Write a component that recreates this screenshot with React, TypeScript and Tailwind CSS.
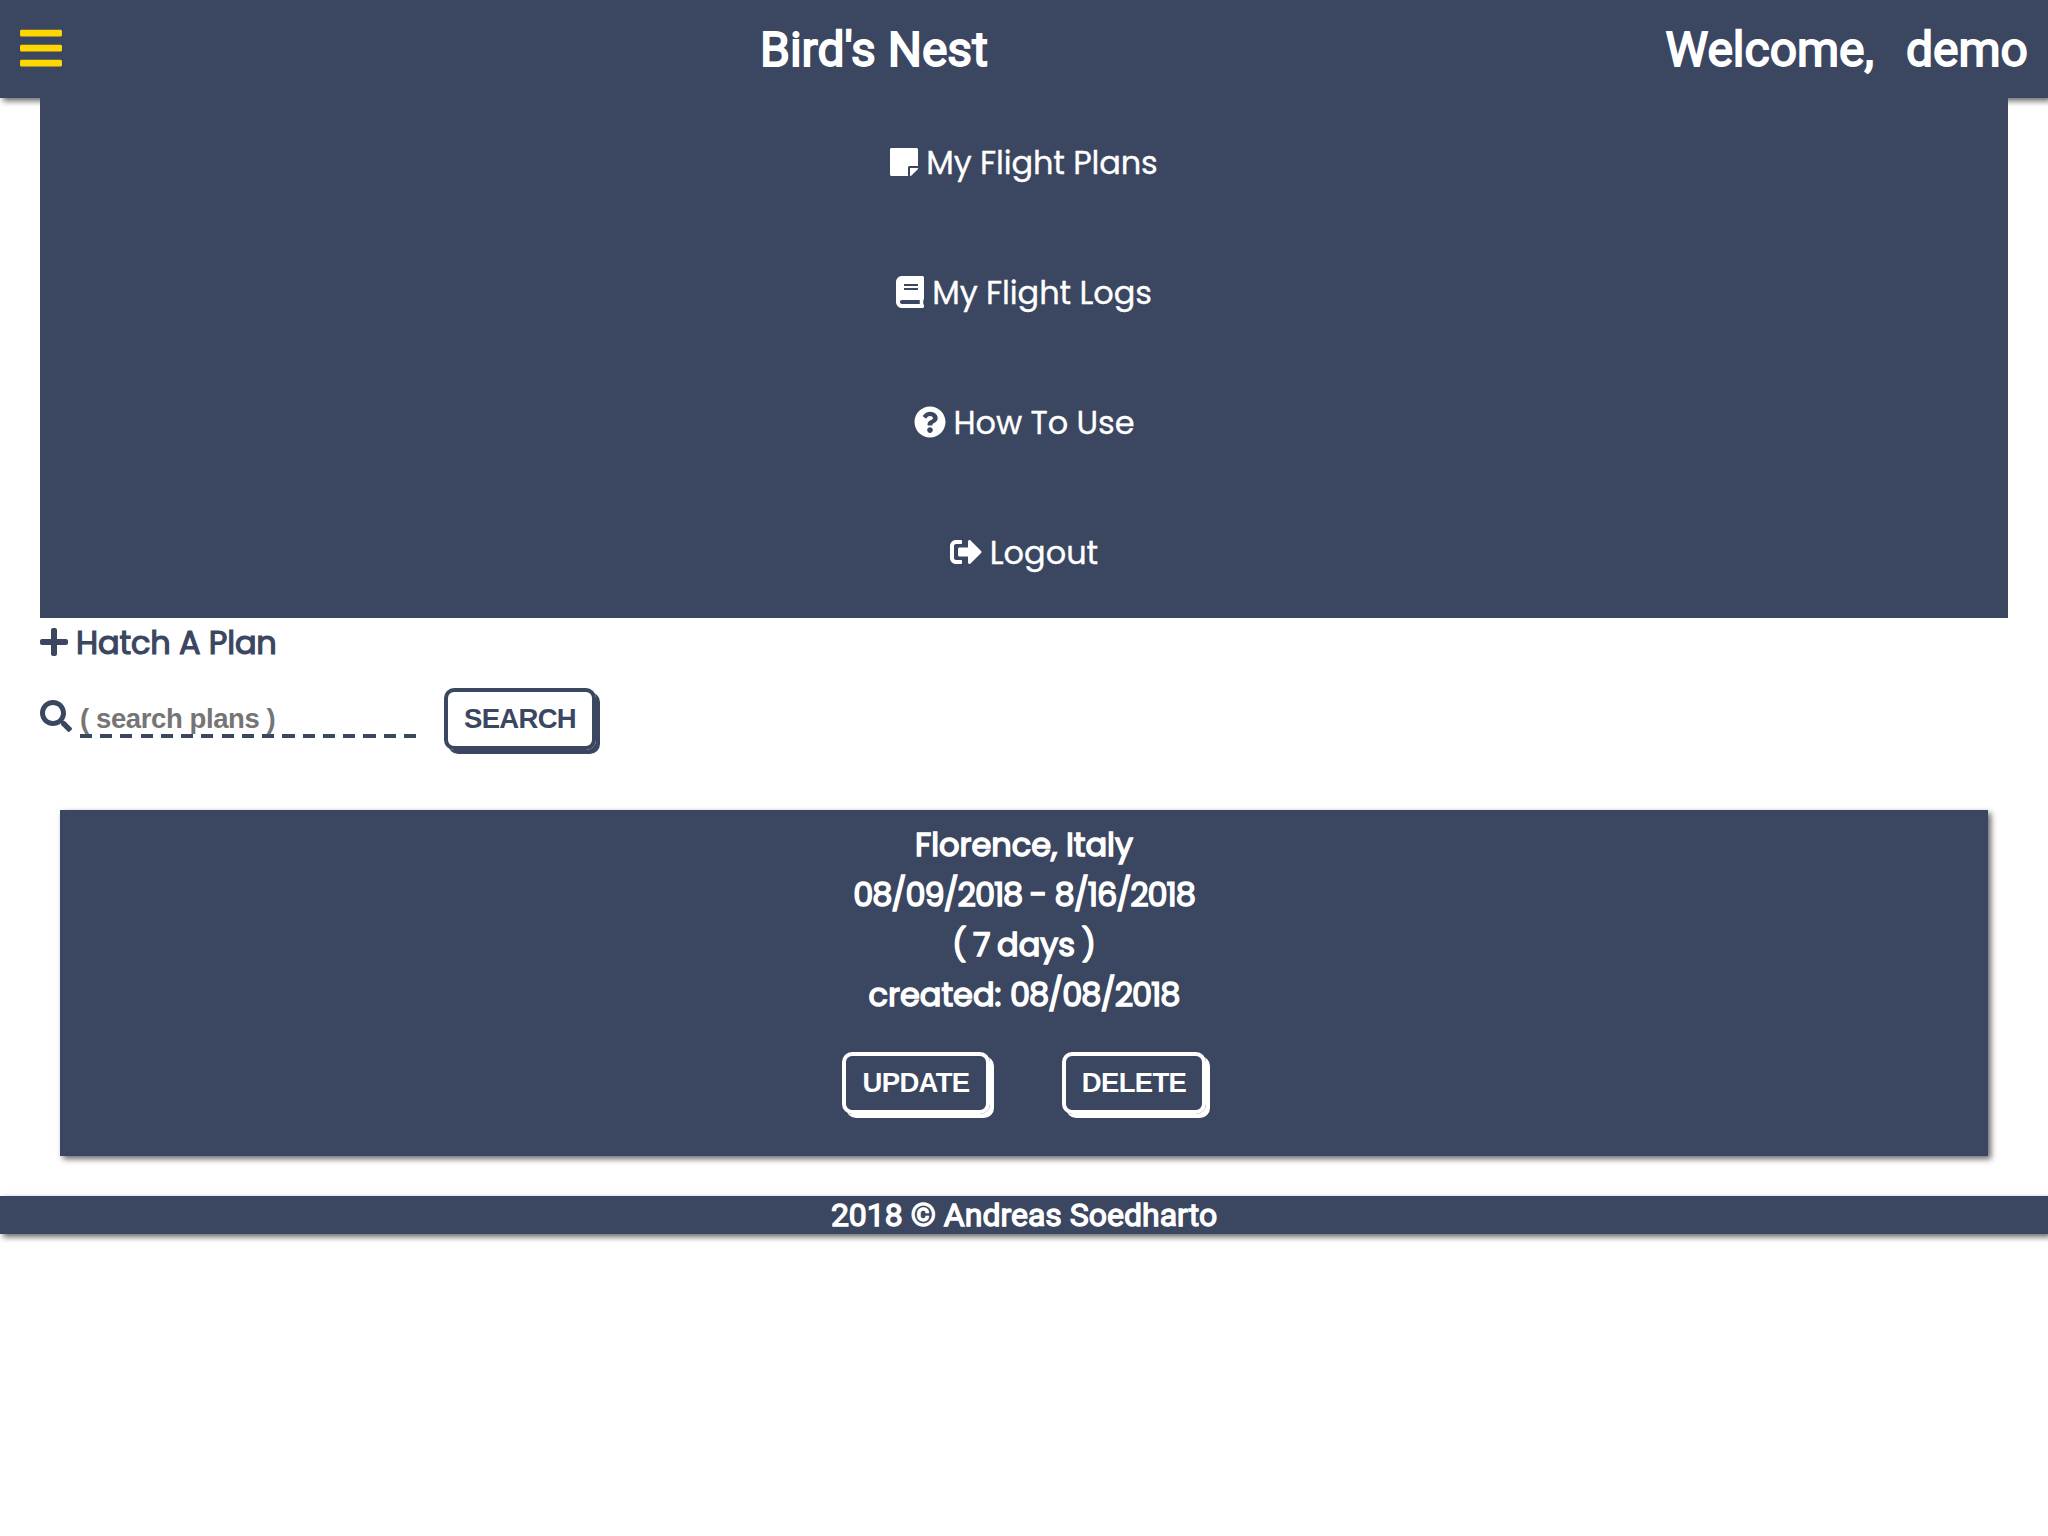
import type { ReactNode } from "react";
import { FaBars, FaBook, FaPlus, FaQuestionCircle, FaSearch, FaSignOutAlt, FaStickyNote } from "react-icons/fa";

const poppins = "font-[Poppins,Inter,sans-serif]";

function MenuItem({ icon, label, spacing }: { icon: ReactNode; label: string; spacing: string }) {
  return (
    <a className="flex h-[130px] items-center justify-center gap-2 pb-[2px] text-white">
      {icon}
      <span className={`${poppins} pt-[2px] text-[32px] leading-12 [-webkit-text-stroke:0.3px_white] ${spacing}`}>{label}</span>
    </a>
  );
}

function Button({ label, className }: { label: string; className: string }) {
  return (
    <button
      className={`h-[62px] rounded-[10px] border-4 pb-[1px] text-center font-['Liberation_Sans',Arial,sans-serif] text-[27.5px] font-bold tracking-[-0.7px] ${className}`}
    >
      {label}
    </button>
  );
}

export default function App() {
  return (
    <div className="min-h-[1536px] bg-white font-[Roboto,sans-serif]">
      <header className="flex h-[98px] items-center bg-[#3b4660] pr-5 pl-5 text-[48px] text-white shadow-[3px_3px_6px_#00000099] [-webkit-text-stroke:1.8px_white]">
        <FaBars className="mb-[2px] h-12 w-[42px] text-[#ffd700]" />
        <h1 className="ml-[698px] pt-[2px]">Bird's Nest</h1>
        <h1 className="ml-auto flex gap-8 pt-[2px]">
          <span>Welcome,</span>
          <span>demo</span>
        </h1>
      </header>

      <nav className="relative mx-10 bg-[#3b4660]">
        <MenuItem icon={<FaStickyNote className="h-8 w-7" />} label="My Flight Plans" spacing="tracking-[-0.15px]" />
        <MenuItem icon={<FaBook className="h-8 w-7" />} label="My Flight Logs" spacing="tracking-[-0.1px]" />
        <MenuItem icon={<FaQuestionCircle className="size-8" />} label="How To Use" spacing="tracking-[-0.1px]" />
        <MenuItem icon={<FaSignOutAlt className="size-8" />} label="Logout" spacing="tracking-normal" />
      </nav>

      <main className="text-[#3b4660]">
        <div className="mx-10 flex h-12 items-center gap-2">
          <FaPlus className="h-8 w-7" />
          <span className={`${poppins} pt-[2px] text-[32px] leading-[46px] tracking-[-0.15px] [-webkit-text-stroke:1.2px_#3b4660]`}>
            Hatch A Plan
          </span>
        </div>
        <form className="mx-10 mt-[22px] flex h-[62px] items-start">
          <FaSearch className="mt-3 size-8" />
          <input
            placeholder="( search plans )"
            className="mt-[13px] ml-2 h-[37px] w-[336px] bg-[repeating-linear-gradient(90deg,#3b4660_0_12px,transparent_12px_20.25px)] bg-[length:100%_4px] bg-bottom bg-no-repeat pt-[2px] pb-[3px] font-['Liberation_Sans',Arial,sans-serif] text-[27.5px] font-bold tracking-[-0.4px] placeholder:text-[#757575]"
          />
          <Button label="SEARCH" className="ml-7 w-[152px] border-[#3b4660] shadow-[4px_4px_0_#3b4660]" />
        </form>

        <section className="mx-[60px] mt-[60px] flex h-[346px] flex-col items-center bg-[#3b4660] pt-[10px] text-white shadow-[3px_3px_6px_#00000099]">
          <div className={`${poppins} flex flex-col items-center text-[32px] leading-[50px] [-webkit-text-stroke:1.5px_white]`}>
            <p>Florence, Italy</p>
            <p className="tracking-[-1.1px]">
              08/09/2018 -<span className="ml-px"> 8/16/2018</span>
            </p>
            <p className="[word-spacing:-2px]">( 7 days )</p>
            <p>
              created: <span className="tracking-[-1.05px]">08/08/2018</span>
            </p>
          </div>
          <div className="mt-8 flex gap-[72px]">
            <Button label="UPDATE" className="w-[148px] border-white shadow-[4px_4px_0_white]" />
            <Button label="DELETE" className="w-[144px] border-white shadow-[4px_4px_0_white]" />
          </div>
        </section>
      </main>

      <footer className="mt-10 h-[38px] bg-[#3b4660] text-center text-[32px] leading-[38px] text-white shadow-[3px_3px_6px_#00000099] [-webkit-text-stroke:1.3px_white]">
        2018 © Andreas Soedharto
      </footer>
    </div>
  );
}
